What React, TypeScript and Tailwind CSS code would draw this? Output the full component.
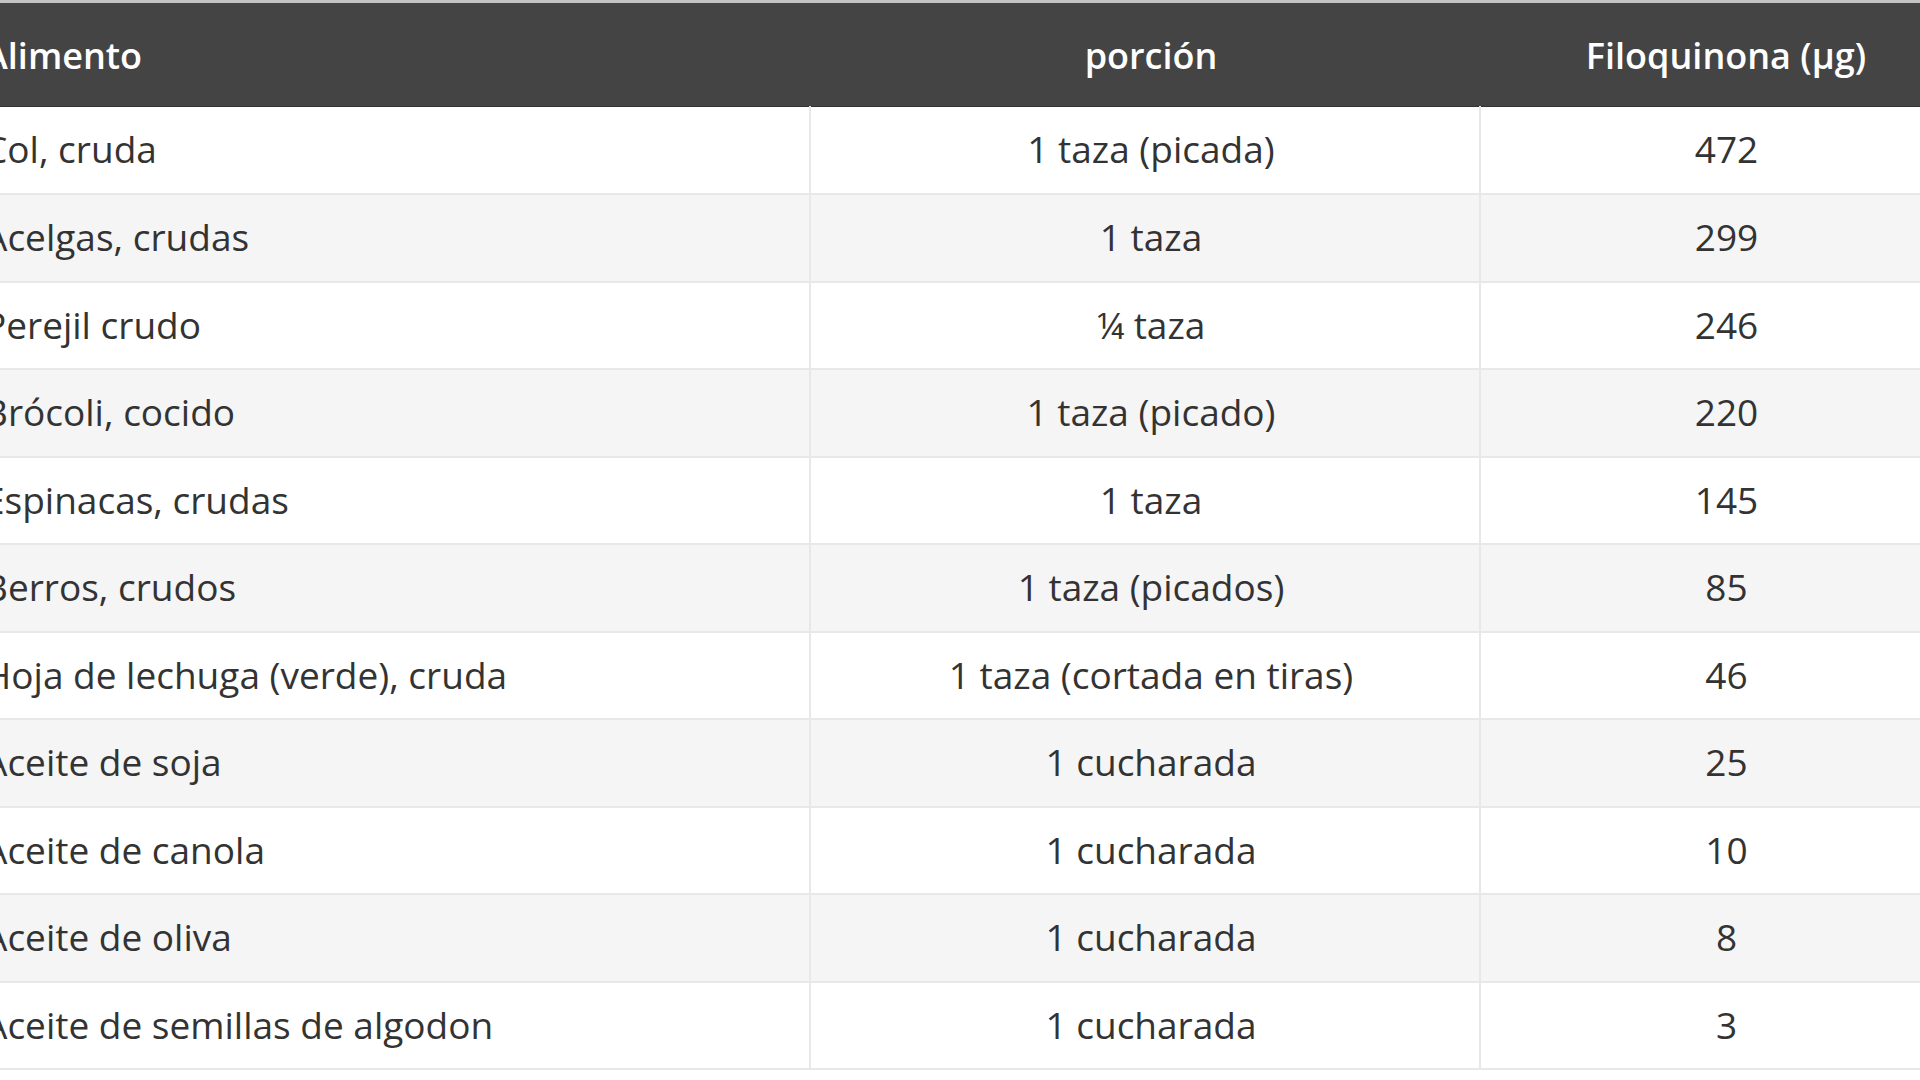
const rows: [string, string, string][] = [
  ["Col, cruda", "1 taza (picada)", "472"],
  ["Acelgas, crudas", "1 taza", "299"],
  ["Perejil crudo", "¼ taza", "246"],
  ["Brócoli, cocido", "1 taza (picado)", "220"],
  ["Espinacas, crudas", "1 taza", "145"],
  ["Berros, crudos", "1 taza (picados)", "85"],
  ["Hoja de lechuga (verde), cruda", "1 taza (cortada en tiras)", "46"],
  ["Aceite de soja", "1 cucharada", "25"],
  ["Aceite de canola", "1 cucharada", "10"],
  ["Aceite de oliva", "1 cucharada", "8"],
  ["Aceite de semillas de algodon", "1 cucharada", "3"],
];

export default function App() {
  return (
    <div className="w-[1920px] h-[1080px] overflow-hidden bg-white font-['Open_Sans',sans-serif] text-[37px] text-[#333]">
      <table className="ml-[-36px] w-[1996px] table-fixed border-collapse border-t-[3px] border-[#c4c4c4]">
        <colgroup>
          <col className="w-[846px]" />
          <col className="w-[670px]" />
          <col />
        </colgroup>
        <thead>
          <tr className="h-[105px] bg-[#444] border-b border-[#333] text-white text-[36px]">
            <th className="pl-[20px] pt-[2px] text-left font-semibold">Alimento</th>
            <th className="pl-[26px] pr-[14px] pt-[2px] text-center font-semibold">porción</th>
            <th className="pl-[26px] pr-[14px] pt-[2px] text-center font-semibold">Filoquinona (µg)</th>
          </tr>
        </thead>
        <tbody>
          {rows.map(([food, portion, amount], i) => (
            <tr
              key={food}
              className={`h-[87.5px] border-b-2 border-[#e8e8e8] ${i % 2 === 1 ? "bg-[#f5f5f5]" : "bg-white"}`}
            >
              <td className="pl-[20px] pb-[2px] text-left">{food}</td>
              <td className="pl-[26px] pr-[14px] pb-[2px] text-center border-l-2 border-[#e8e8e8]">{portion}</td>
              <td className="pl-[26px] pr-[14px] pb-[2px] text-center border-l-2 border-[#e8e8e8]">{amount}</td>
            </tr>
          ))}
        </tbody>
      </table>
    </div>
  );
}
